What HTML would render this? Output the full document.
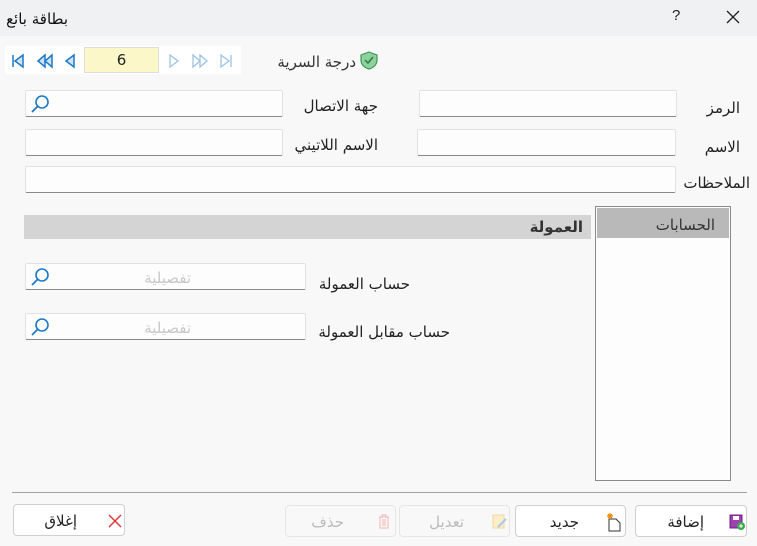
<!DOCTYPE html>
<html><head><meta charset="utf-8"><style>
*{margin:0;padding:0;box-sizing:border-box}
body{width:757px;height:546px;background:#f8f8f8;font-family:"DejaVu Sans","Liberation Sans",sans-serif;font-size:15px;color:#222;position:relative;overflow:hidden}
.a{position:absolute}
.t{position:absolute;white-space:nowrap;direction:rtl;line-height:20px}
.in{position:absolute;background:#fdfdfd;border:1px solid #e2e2e2;border-bottom:1px solid #8a8a8a;border-radius:2px}
.btn{position:absolute;top:505px;height:32px;background:#fff;border:1px solid #cfcfcf;border-radius:4px}
.btn.d{background:#f8f8f8;border-color:#e6e6e6}
.btn .t{top:6px}
.mag{position:absolute;left:4px;top:3px}
</style></head><body>
<div class="a" style="left:0;top:0;width:757px;height:36px;background:#eff1f3"></div>
<div class="t" style="right:689px;top:9px;font-size:15px;color:#111">بطاقة بائع</div>
<div class="a" style="left:672px;top:7px;font-size:15px;font-family:'Liberation Sans',sans-serif">?</div>
<svg class="a" style="left:726px;top:10px" width="14" height="14"><path d="M1 1L13 13M13 1L1 13" stroke="#222" stroke-width="1.3"/></svg>

<div class="a" style="left:5px;top:46px;width:236px;height:28px;background:#fff"></div>
<svg class="a" style="left:10px;top:53px" width="225" height="16">
<g fill="none" stroke="#1e78c8" stroke-width="1.5"><path d="M3 2V14"/><path d="M13 2L5 8L13 14Z" fill="#cfe3f5"/>
<path d="M35 2L28 8L35 14Z M42 2L35 8L42 14Z" fill="#cfe3f5"/><path d="M64 2L56 8L64 14Z" fill="#cfe3f5"/></g>
<g fill="none" stroke="#9cc2e4" stroke-width="1.3"><path d="M160 2L168 8L160 14Z"/><path d="M183 2L190 8L183 14Z M190 2L197 8L190 14Z"/><path d="M211 2L219 8L211 14Z M221 2V14"/></g>
</svg>
<div class="a" style="left:84px;top:47px;width:75px;height:26px;background:#fbf7c8;border:1px solid #ddd;text-align:center;line-height:25px;font-size:15px">6</div>
<div class="t" style="right:401px;top:52px;color:#333">درجة السرية</div>
<svg class="a" style="left:360px;top:51px" width="18" height="19"><path d="M9 1L17 4V9C17 14 13 17 9 18C5 17 1 14 1 9V4Z" fill="#8fd19e" stroke="#3a9a52" stroke-width="1.2"/><path d="M5 9L8 12L13 6" fill="none" stroke="#2b7a3e" stroke-width="1.5"/></svg>

<div class="in" style="left:25px;top:90px;width:258px;height:27px"><svg class="mag" width="20" height="20"><circle cx="12" cy="8" r="6" fill="none" stroke="#1e78c8" stroke-width="1.6"/><path d="M8 12L2 18" stroke="#1e78c8" stroke-width="1.8"/></svg></div>
<div class="t" style="right:379px;top:96px">جهة الاتصال</div>
<div class="in" style="left:419px;top:90px;width:258px;height:27px"></div>
<div class="t" style="right:17px;top:98px">الرمز</div>
<div class="in" style="left:25px;top:129px;width:258px;height:27px"></div>
<div class="t" style="right:379px;top:135px">الاسم اللاتيني</div>
<div class="in" style="left:417px;top:129px;width:259px;height:27px"></div>
<div class="t" style="right:17px;top:137px">الاسم</div>
<div class="in" style="left:25px;top:166px;width:651px;height:27px"></div>
<div class="t" style="right:7px;top:173px">الملاحظات</div>

<div class="a" style="left:24px;top:215px;width:567px;height:24px;background:#d4d4d4"></div>
<div class="t" style="right:174px;top:217px;font-weight:bold;color:#333">العمولة</div>
<div class="a" style="left:595px;top:206px;width:136px;height:275px;background:#fdfdfd;border:1px solid #8a8a8a"></div>
<div class="a" style="left:597px;top:208px;width:132px;height:30px;background:#b9b9b9"></div>
<div class="t" style="right:42px;top:215px;color:#333">الحسابات</div>

<div class="in" style="left:25px;top:263px;width:281px;height:27px"><svg class="mag" width="20" height="20"><circle cx="12" cy="8" r="6" fill="none" stroke="#1e78c8" stroke-width="1.6"/><path d="M8 12L2 18" stroke="#1e78c8" stroke-width="1.8"/></svg></div>
<div class="t" style="right:566px;top:268px;color:#c8c8c8">تفصيلية</div>
<div class="t" style="right:347px;top:274px">حساب العمولة</div>
<div class="in" style="left:25px;top:313px;width:281px;height:27px"><svg class="mag" width="20" height="20"><circle cx="12" cy="8" r="6" fill="none" stroke="#1e78c8" stroke-width="1.6"/><path d="M8 12L2 18" stroke="#1e78c8" stroke-width="1.8"/></svg></div>
<div class="t" style="right:566px;top:318px;color:#c8c8c8">تفصيلية</div>
<div class="t" style="right:307px;top:322px">حساب مقابل العمولة</div>

<div class="a" style="left:12px;top:492px;width:735px;height:1px;background:#a0a0a0"></div>

<div class="btn" style="left:13px;width:112px;top:504px"><div class="t" style="right:47px">إغلاق</div><svg class="a" style="left:94px;top:9px" width="14" height="14"><path d="M1 1L13 13M13 1L1 13" stroke="#e03030" stroke-width="1.4"/></svg></div>
<div class="btn d" style="left:285px;width:111px"><div class="t" style="right:51px;color:#bbb">حذف</div><svg class="a" style="left:92px;top:8px" width="12" height="15"><path d="M1 3H11M4 3V1H8V3M2 3V14H10V3M5 5V12M7 5V12" fill="none" stroke="#f2b3b3"/></svg></div>
<div class="btn d" style="left:399px;width:111px"><div class="t" style="right:45px;color:#bbb">تعديل</div><svg class="a" style="left:92px;top:8px" width="16" height="16"><rect x="1" y="1" width="11" height="13" fill="#fbeec8" stroke="#f2d89a"/><path d="M6 13L14 5" stroke="#a8c8e8" stroke-width="2"/></svg></div>
<div class="btn" style="left:515px;width:111px"><div class="t" style="right:46px">جديد</div><svg class="a" style="left:90px;top:6px" width="16" height="20"><path d="M3 7H10L14 11V19H3Z" fill="#fff" stroke="#333"/><path d="M4 1V7M1 4H7M2 2L6 6M6 2L2 6" stroke="#f08a00" stroke-width="1.2"/></svg></div>
<div class="btn" style="left:635px;width:112px"><div class="t" style="right:42px">إضافة</div><svg class="a" style="left:93px;top:8px" width="16" height="17"><rect x="1" y="1" width="12" height="13" fill="#a040b0" stroke="#6a2080"/><rect x="4" y="2" width="6" height="4" fill="#fff"/><circle cx="12" cy="12" r="4" fill="#3aaa50"/><path d="M12 10V14M10 12H14" stroke="#fff"/></svg></div>
</body></html>
